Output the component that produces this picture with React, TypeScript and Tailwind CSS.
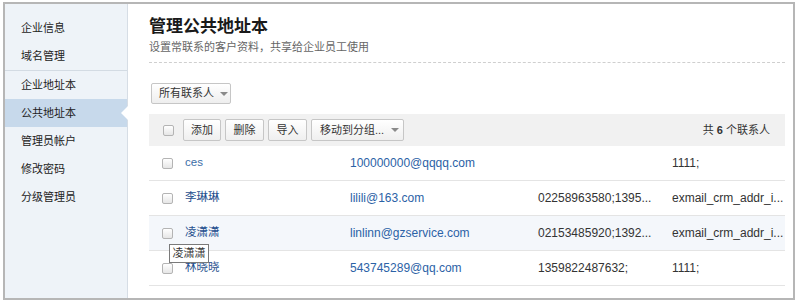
import React from "react";

const FONT = { fontFamily: '"Liberation Sans", "Noto Sans CJK SC", sans-serif' };

function Box() {
  return (
    <span className="inline-block w-[11px] h-[11px] border border-[#b4b4b4] rounded-[2px] bg-gradient-to-b from-white to-[#e6e6e6]" />
  );
}

function Btn({ children, w }: { children: React.ReactNode; w: string }) {
  return (
    <div
      className={`h-[22px] ${w} flex items-center justify-center border border-[#c6c6c6] rounded-[2px] bg-gradient-to-b from-white to-[#efefef] text-[11px] text-[#333]`}
    >
      {children}
    </div>
  );
}

function Caret() {
  return <span className="inline-block w-0 h-0 border-l-[4px] border-r-[4px] border-t-[4px] border-l-transparent border-r-transparent border-t-[#8a8a8a]" />;
}

type Row = { name: string; nameColor: string; email: string; phone: string; note: string; hover?: boolean; tip?: boolean };

const rows: Row[] = [
  { name: "ces", nameColor: "text-[#3b6ea8]", email: "100000000@qqqq.com", phone: "", note: "1111;" },
  { name: "李琳琳", nameColor: "text-[#1f4f8e]", email: "lilili@163.com", phone: "02258963580;1395...", note: "exmail_crm_addr_i..." },
  { name: "凌潇潇", nameColor: "text-[#1f4f8e]", email: "linlinn@gzservice.com", phone: "02153485920;1392...", note: "exmail_crm_addr_i...", hover: true, tip: true },
  { name: "林晓晓", nameColor: "text-[#1f4f8e]", email: "543745289@qq.com", phone: "1359822487632;", note: "1111;" },
];

function SideItem({ children, active }: { children: React.ReactNode; active?: boolean }) {
  return (
    <div className={`relative h-[28px] flex items-center pl-[16px] ${active ? "bg-[#c7d9eb]" : ""}`}>
      {children}
      {active && (
        <span className="absolute right-[-1px] top-[7px] w-0 h-0 border-t-[7px] border-b-[7px] border-r-[7px] border-t-transparent border-b-transparent border-r-white" />
      )}
    </div>
  );
}

export default function App() {
  return (
    <div className="w-[797px] h-[303px] bg-white pl-[3px] pt-[2px]" style={FONT}>
      <div className="w-[792px] h-[298px] border-2 border-[#b6b6b6] flex">
        <aside className="w-[123px] shrink-0 bg-[#eef3f8] border-r border-[#d6dde5] pt-[10px] text-[11px] text-[#222]">
          <div className="border-b border-[#d3dbe3]">
            <SideItem>企业信息</SideItem>
            <SideItem>域名管理</SideItem>
          </div>
          <SideItem>企业地址本</SideItem>
          <SideItem active>公共地址本</SideItem>
          <SideItem>管理员帐户</SideItem>
          <SideItem>修改密码</SideItem>
          <SideItem>分级管理员</SideItem>
        </aside>
        <main className="flex-1 pl-[21px] pr-[8px] pt-[8px]">
          <div className="border-b border-dashed border-[#cfcfcf] pb-[7px]">
            <h1 className="mt-[3px] h-[24px] leading-[24px] text-[17px] font-bold text-[#1a1a1a]">管理公共地址本</h1>
            <p className="h-[16px] leading-[16px] text-[11px] text-[#666]">设置常联系的客户资料，共享给企业员工使用</p>
          </div>
          <div className="mt-[20px] flex">
            <div className="h-[21px] w-[80px] ml-[2px] flex items-center gap-[6px] pl-[7px] border border-[#c6c6c6] rounded-[2px] bg-gradient-to-b from-white to-[#eeeeee] text-[11px] text-[#333]">
              所有联系人 <Caret />
            </div>
          </div>
          <div className="mt-[10px] h-[32px] bg-[#f1f1f1] flex items-center pl-[14px] pr-[15px]">
            <Box />
            <div className="ml-[9px] flex gap-[4px]">
              <Btn w="w-[38px]">添加</Btn>
              <Btn w="w-[39px]">删除</Btn>
              <Btn w="w-[39px]">导入</Btn>
              <div className="h-[22px] w-[93px] flex items-center gap-[7px] pl-[8px] border border-[#c6c6c6] rounded-[2px] bg-gradient-to-b from-white to-[#efefef] text-[11px] text-[#333]">
                移动到分组... <Caret />
              </div>
            </div>
            <div className="ml-auto text-[11px] text-[#333]">
              共 <b className="font-bold">6</b> 个联系人
            </div>
          </div>
          {rows.map((r) => (
            <div
              key={r.name}
              className={`relative h-[35px] flex items-center border-b border-[#e4e4e4] text-[12px] ${r.hover ? "bg-[#f4f7fb]" : ""}`}
            >
              <div className="w-[36px] pl-[13px] flex items-center">
                <Box />
              </div>
              <div className={`w-[165px] text-[11.5px] ${r.nameColor}`}>{r.name}</div>
              <div className="w-[188px] text-[#2b62a6]">{r.email}</div>
              <div className="w-[134px] text-[#333]">{r.phone}</div>
              <div className="flex-1 text-[#333]">{r.note}</div>
              {r.tip && (
                <div className="absolute left-[20px] top-[28px] h-[19px] w-[40px] flex items-center justify-center bg-white border border-[#7a7a7a] text-[11px] text-[#333] z-10">
                  凌潇潇
                </div>
              )}
            </div>
          ))}
        </main>
      </div>
    </div>
  );
}
